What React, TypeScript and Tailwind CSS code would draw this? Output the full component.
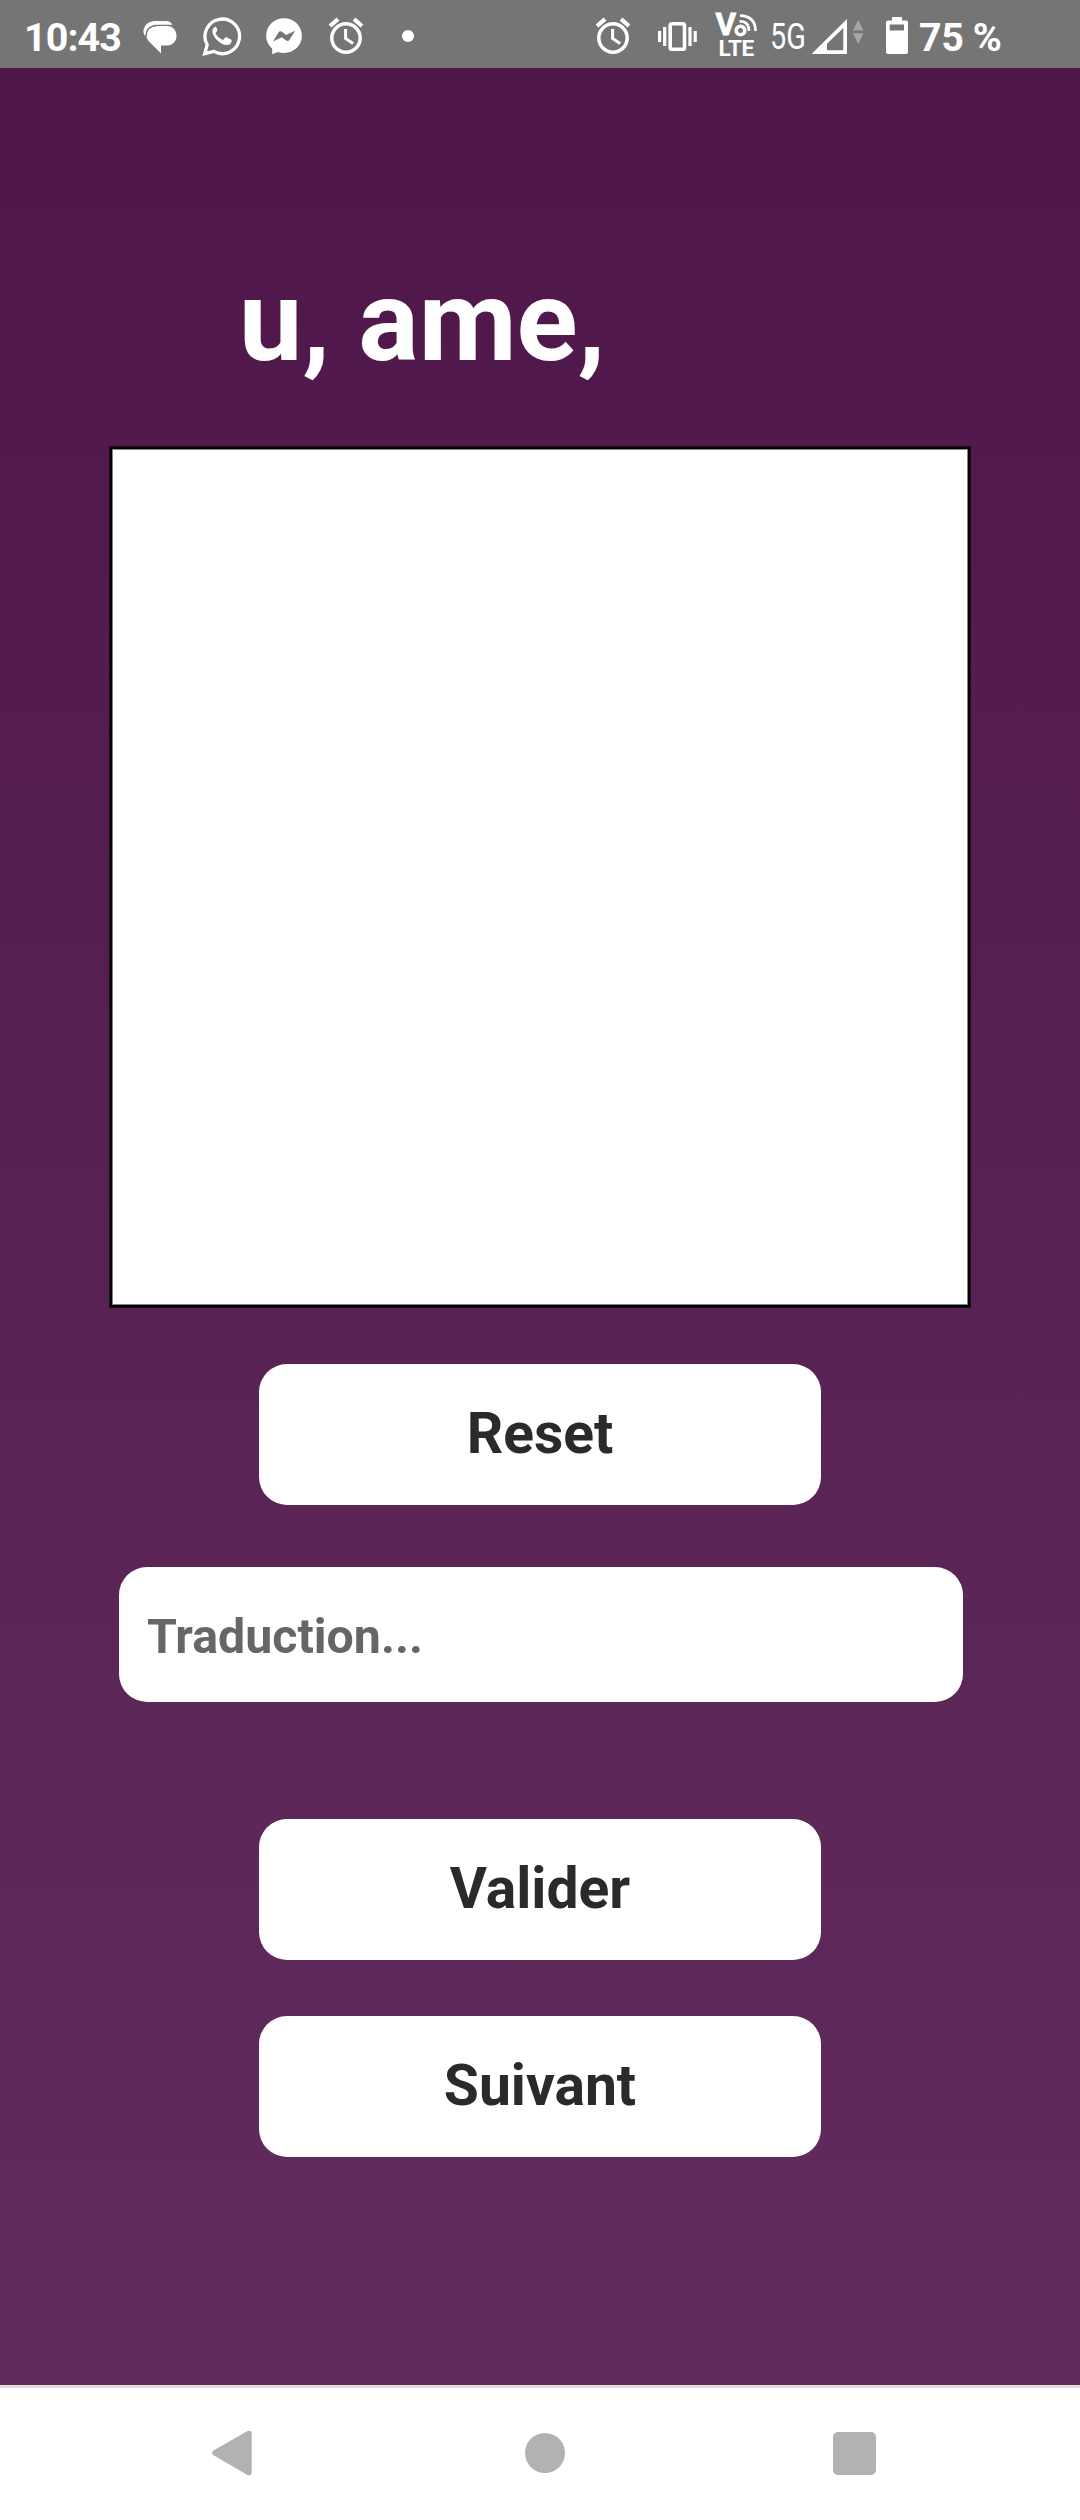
import React from 'react';

function AlarmIcon({ className }: { className?: string }) {
  return (
    <svg className={className} width="36" height="38" viewBox="0 0 36 38" fill="none" stroke="white">
      <circle cx="18" cy="22" r="14.200" strokeWidth="3.500" />
      <path d="M2 10 10 3.200M34 10 26 3.200" strokeWidth="4.200" />
      <path d="M17.600 13v9.500l7.500 5" strokeWidth="3" />
    </svg>
  );
}

function StatusBar() {
  return (
    <header className="h-[68px] w-full bg-[#757575] text-white">
      <div className="flex h-full items-start">
        <span className="ml-[24px] mt-[15px] w-[100px] shrink-0 whitespace-nowrap text-[39.4px] font-bold leading-[46px] tracking-[-0.9px]">10:43</span>
        <svg className="ml-[19px] mt-[20px] shrink-0" width="35" height="34" viewBox="0 0 35 34">
          <path d="M11 1h13q4 .4 5.500 4H14Q4 6 2.500 16Q0 14 .5 10Q2 2 11 1z" fill="white" />
          <path d="M14 6h10c6 0 9.500 4.500 9.500 9.800S30 25.500 24 25.500h-6V33.500L7 22.500C4.500 20 3.500 18 3.500 15.500 3.500 10 8 6 14 6z" fill="white" />
          <path d="M3.200 16Q3 6 14 5.300h15" fill="none" stroke="#757575" strokeWidth="1.300" />
        </svg>
        <svg className="ml-[24px] mt-[16px] shrink-0" width="40" height="40" viewBox="0 0 39 40">
          <path d="M2.200 37.700 4.700 28.800A17.300 17.300 0 1 1 11.300 35.400Z" fill="none" stroke="white" strokeWidth="3.300" />
          <path d="M13.500 10.800c-1.600-.6-3.600 1.900-3.600 4.300 0 6.200 8.200 14 14.200 14 2.600 0 5-1.700 5-4.300 0-.8-.2-1-1-1.500l-4.200-2c-.8-.3-1.200 0-2.700 2.200-.5.600-1 .4-1.700.1-3-1.300-5.200-3.600-6.400-6-.2-.6 0-.9 1.600-2.800.4-.6.100-1-.7-3.100-.2-.6-.2-.8-.5-.9z" fill="white" />
        </svg>
        <svg className="ml-[24px] mt-[18px] shrink-0" width="37" height="37" viewBox="0 0 37 37">
          <path d="M18 .3C8 .3.200 7.800.200 17.800c0 5.200 2.300 9.700 6 12.600V36.200l5.500-2.200c2 .7 4 1 6.300 1 10 0 17.900-7.400 17.900-17.200S28 .3 18 .3z" fill="white" />
          <path d="M7 23.600 12.500 14.500Q14 12.300 16.300 14L20 17l9.200-4.300-5.700 9q-1.400 2.200-3.700.6l-4-3z" fill="#757575" />
        </svg>
        <AlarmIcon className="ml-[25px] mt-[16px] shrink-0" />
        <span className="ml-[38px] mt-[30px] size-[12px] shrink-0 rounded-full bg-white" />
        <AlarmIcon className="ml-[181px] mt-[16px] shrink-0" />
        <svg className="ml-[27px] mt-[22px] shrink-0" width="40" height="29" viewBox="0 0 40 29" fill="none" stroke="white">
          <rect x="12.200" y="1.800" width="14.300" height="25.400" rx="1.800" strokeWidth="3.600" />
          <path d="M6.700 5v19M32 5v19M1.600 9v11M37.200 9v11" strokeWidth="3.200" />
        </svg>
        <div className="relative ml-[16px] h-[60px] w-[44px] shrink-0">
          <span className="absolute left-[1.500px] top-[14px] text-[31.500px] font-bold leading-[22px] [-webkit-text-stroke:0.800px_white]">V</span>
          <svg className="mt-[13px]" width="44" height="26" viewBox="0 0 44 26" fill="none" stroke="white">
            <circle cx="26.500" cy="17.500" r="4.300" strokeWidth="3.600" />
            <path d="M25.500 8.200q9.500 0 9.500 9.800M26 2.600Q41.500 3 41.500 18" strokeWidth="2.600" />
          </svg>
          <span className="absolute left-[4.500px] top-[41px] text-[22.600px] font-bold leading-[16px] tracking-[-0.300px]">LTE</span>
        </div>
        <span className="ml-[12px] mt-[15px] w-[38px] shrink-0 origin-left scale-x-[0.8] whitespace-nowrap text-[36px] leading-[44px]">5G</span>
        <svg className="ml-[3px] mt-[18px] shrink-0" width="54" height="37" viewBox="0 0 54 37">
          <path fillRule="evenodd" d="M.5 36 36 1v35zM16 32.300h16.300V10L16 25.800z" fill="white" />
          <path d="M42 12.500 47.200 2 52.500 12.500zM42 15.300h10.500L47.200 26z" fill="#a6a6a6" />
        </svg>
        <svg className="ml-[21px] mt-[17px] shrink-0" width="22" height="37" viewBox="0 0 22 37">
          <path fillRule="evenodd" d="M6 0h10v3.500h4q2 0 2 2V35q0 2-2 2H2q-2 0-2-2V5.500q0-2 2-2h4zM3.700 7.500v6H18v-6z" fill="white" />
        </svg>
        <span className="ml-[11px] mt-[15px] shrink-0 whitespace-nowrap text-[39.4px] font-bold leading-[46px] tracking-[-0.400px]">75 %</span>
      </div>
    </header>
  );
}

function ActionButton({ label, className }: { label: string; className: string }) {
  return (
    <button className={`${className} block h-[141px] w-[562px] rounded-[28px] bg-white pb-px text-center text-[57px] font-bold leading-[66px] text-[#2a2a2a]`}>
      {label}
    </button>
  );
}

export default function App() {
  return (
    <div className="flex h-[2520px] w-[1080px] flex-col overflow-hidden bg-white font-['Roboto',sans-serif]">
      <StatusBar />
      <main className="flex h-[2317px] flex-col items-center bg-linear-to-b from-[#4f1649] to-[#612c5d]">
        <h1 className="mt-[188px] w-full pl-[239px] text-[113px] font-bold leading-[132px] text-white">u, ame,</h1>
        <div className="mt-[58px] size-[862px] shrink-0 border border-[#21091f] bg-white">
          <div className="size-full border-2 border-black">
            <div className="size-full border border-[#848484]" />
          </div>
        </div>
        <ActionButton label="Reset" className="mt-[56px]" />
        <input
          className="ml-[2px] mt-[62px] h-[135px] w-[844px] rounded-[28px] bg-white px-[28px] pt-[4px] text-[48.3px] font-bold text-[#666666] outline-none placeholder:text-[#666666]"
          placeholder="Traduction..."
        />
        <ActionButton label="Valider" className="mt-[117px]" />
        <ActionButton label="Suivant" className="mt-[56px]" />
      </main>
      <nav className="flex h-[135px] items-start border-t-[3px] border-[#dddddd] bg-white">
        <svg className="ml-[211px] mt-[42px]" width="42" height="46" viewBox="0 0 42 46">
          <path d="M2.500 20.500 36 1.300Q40.700-.8 40.700 4V42Q40.700 46.700 36 44.700L2.500 25.300Q-.5 23 2.500 20.500z" fill="#b2b2b2" />
        </svg>
        <span className="ml-[272px] mt-[45px] size-[40px] rounded-full bg-[#b2b2b2]" />
        <span className="ml-[268px] mt-[44px] size-[43px] rounded-[5px] bg-[#b2b2b2]" />
      </nav>
    </div>
  );
}
